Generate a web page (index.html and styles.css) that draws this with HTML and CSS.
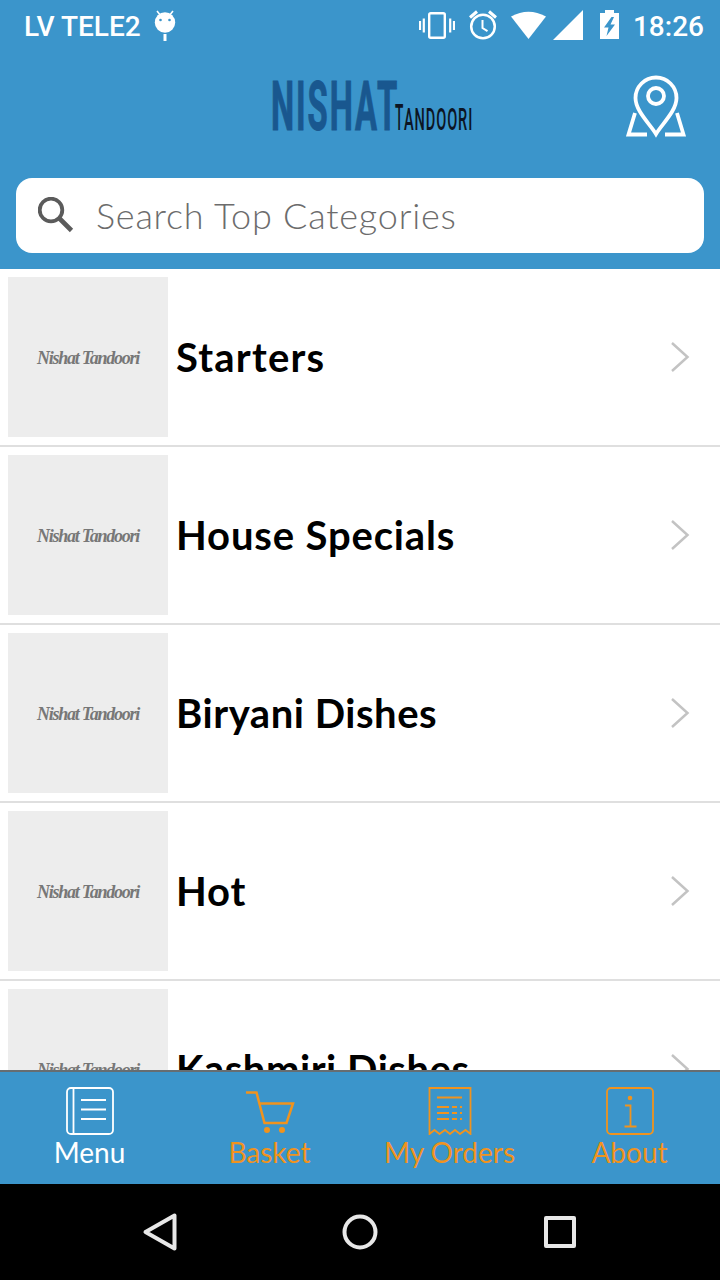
FILE: index.html
```html
<!DOCTYPE html>
<html lang="en">
<head>
    <meta charset="UTF-8">
    <meta name="viewport" content="width=device-width, initial-scale=1.0">
    <title>Nishat Tandoori</title>
    <link rel="stylesheet" href="styles.css">
</head>
<body>
    <header class="header">
        <div class="status-bar">
            <span class="carrier">LV TELE2</span>
            <svg class="droid" width="22" height="32" viewBox="0 0 22 32">
                <path d="M3 1l4 5M19 1l-4 5" stroke="#fff" stroke-width="1.6"/>
                <circle cx="11" cy="12.500" r="10.200" fill="#fff"/>
                <circle cx="6.500" cy="10" r="1.300" fill="#3b95cb"/>
                <circle cx="15.500" cy="10" r="1.300" fill="#3b95cb"/>
                <path d="M11 24v7" stroke="#fff" stroke-width="3"/>
            </svg>
            <div class="status-icons">
                <svg width="36" height="32" viewBox="0 0 36 32">
                    <rect x="10.200" y="3.200" width="15.600" height="24.600" rx="1.500" fill="none" stroke="#fff" stroke-width="2.400"/>
                    <path d="M1 11v9M4.800 8.500v14M31.200 8.500v14M35 11v9" stroke="#fff" stroke-width="2.200"/>
                </svg>
                <svg class="alarm" width="28" height="32" viewBox="0 0 28 32">
                    <circle cx="14" cy="16.500" r="11.800" fill="none" stroke="#fff" stroke-width="2.500"/>
                    <path d="M1 7.500l7-6M27 7.500l-7-6" stroke="#fff" stroke-width="3"/>
                    <path d="M13.500 10v8l5 3.200" fill="none" stroke="#fff" stroke-width="2"/>
                </svg>
                <svg class="wifi" width="35" height="32" viewBox="0 0 35 32">
                    <path d="M0 6.500Q17.500-3 35 6.500L17.500 29z" fill="#fff"/>
                </svg>
                <svg class="signal" width="30" height="32" viewBox="0 0 30 32">
                    <path d="M30 0v30H0z" fill="#fff"/>
                </svg>
                <svg class="battery" width="19" height="32" viewBox="0 0 19 32">
                    <path d="M0 3h5V0h9v3h5v26H0z" fill="#fff"/>
                    <path d="M11.500 7L4 17.500h4.500l-2 8.500L15 14.500h-4.500L14 7z" fill="#3b95cb"/>
                </svg>
            </div>
            <span class="clock">18:26</span>
        </div>

        <div class="brand-bar">
            <svg class="logo" width="212" height="80" viewBox="0 -8 212 80">
                <text class="logo-main" transform="translate(0 55) scale(.482 1)">NISHAT</text>
                <text class="logo-cap" transform="translate(124 55) scale(.38 1)">T</text>
                <text class="logo-sub" transform="translate(133 55) scale(.455 1)">ANDOORI</text>
            </svg>
            <svg class="pin" width="62" height="64" viewBox="0 0 62 64">
                <g fill="none" stroke="#fff" stroke-width="3.800">
                    <path d="M31 59C25 49 10.500 36 10.500 23a20.500 20.500 0 0 1 41 0C51.500 36 37 49 31 59z"/>
                    <circle cx="31" cy="21" r="8"/>
                    <path d="M10 38L3.500 59.500h18.500M52 38l6.500 21.500H40"/>
                </g>
            </svg>
        </div>

        <div class="search">
            <svg class="magnifier" width="36" height="36" viewBox="0 0 36 36">
                <circle cx="13" cy="13" r="11.300" fill="none" stroke="#5b5b5b" stroke-width="3.800"/>
                <path d="M21.500 21.500l12 12" stroke="#5b5b5b" stroke-width="4.600"/>
            </svg>
            <span class="placeholder">Search Top Categories</span>
        </div>
    </header>

    <main class="categories">
        <div class="category">
            <div class="thumb"><span>Nishat Tandoori</span></div>
            <span class="name wide">Starters</span>
            <svg class="chevron" width="20" height="32" viewBox="0 0 20 32"><path d="M2 2l15.500 14L2 30"/></svg>
        </div>
        <div class="category">
            <div class="thumb"><span>Nishat Tandoori</span></div>
            <span class="name medium">House Specials</span>
            <svg class="chevron" width="20" height="32" viewBox="0 0 20 32"><path d="M2 2l15.500 14L2 30"/></svg>
        </div>
        <div class="category">
            <div class="thumb"><span>Nishat Tandoori</span></div>
            <span class="name">Biryani Dishes</span>
            <svg class="chevron" width="20" height="32" viewBox="0 0 20 32"><path d="M2 2l15.500 14L2 30"/></svg>
        </div>
        <div class="category">
            <div class="thumb"><span>Nishat Tandoori</span></div>
            <span class="name medium">Hot</span>
            <svg class="chevron" width="20" height="32" viewBox="0 0 20 32"><path d="M2 2l15.500 14L2 30"/></svg>
        </div>
        <div class="category">
            <div class="thumb"><span>Nishat Tandoori</span></div>
            <span class="name">Kashmiri Dishes</span>
            <svg class="chevron" width="20" height="32" viewBox="0 0 20 32"><path d="M2 2l15.500 14L2 30"/></svg>
        </div>
    </main>

    <nav class="tabs">
        <div class="tab active">
            <svg width="48" height="48" viewBox="0 0 48 48">
                <rect x="1" y="1" width="46" height="46" rx="4"/>
                <path d="M7.500 1v46M15 13h25M15 22.500h25M15 32h25"/>
            </svg>
            <span>Menu</span>
        </div>
        <div class="tab">
            <svg width="50" height="48" viewBox="0 0 50 48">
                <path class="basket" d="M1 5.500h10.500l8 30.500h22l6.500-19.500H14.500"/>
                <circle class="dot" cx="22" cy="43" r="3"/>
                <circle class="dot" cx="37" cy="43" r="3"/>
            </svg>
            <span>Basket</span>
        </div>
        <div class="tab">
            <svg width="44" height="48" viewBox="0 0 44 48">
                <path d="M1.500 1h41v46l-5-4-5.500 4-5-4-5 4-5-4-5.500 4-5-4-5 4z"/>
                <path d="M9 10.500h25M9 20h12M24 20h5M32 20h2M9 26h12M24 26h5M32 26h2M9 32h12M24 32h5M32 32h2"/>
            </svg>
            <span>My Orders</span>
        </div>
        <div class="tab">
            <svg width="48" height="48" viewBox="0 0 48 48">
                <rect x="1" y="1" width="46" height="46" rx="4"/>
                <path d="M19 18.500h5.500V39M18.500 39.500h12"/>
                <circle class="dot" cx="24" cy="11" r="2.300"/>
            </svg>
            <span>About</span>
        </div>
    </nav>

    <footer class="nav-bar">
        <svg width="40" height="40" viewBox="0 0 40 40"><path d="M34.500 3.500v33L5.500 20z"/></svg>
        <svg width="40" height="40" viewBox="0 0 40 40"><circle cx="20" cy="20" r="15.500"/></svg>
        <svg width="40" height="40" viewBox="0 0 40 40"><rect x="6" y="6" width="28" height="28"/></svg>
    </footer>
</body>
</html>
```
FILE: styles.css
```css
* {
    box-sizing: border-box;
}

body {
    display: flex;
    flex-direction: column;
    width: 720px;
    height: 1280px;
    margin: 0;
    overflow: hidden;
    background-color: #fff;
    font-family: Lato, "Liberation Sans", sans-serif;
    white-space: nowrap;
}

svg {
    display: block;
    flex: none;
}

/* header */

.header {
    flex: none;
    height: 269px;
    background-color: #3b95cb;
}

.status-bar {
    display: flex;
    align-items: center;
    height: 50px;
    padding: 2px 16px 0 24px;
    color: #fff;
    font-family: Roboto, sans-serif;
    font-size: 28px;
    font-weight: 500;
}

.droid {
    margin-left: 13px;
}

.status-icons {
    display: flex;
    margin-left: auto;
}

.alarm {
    margin-left: 14px;
}

.wifi {
    margin-left: 14px;
}

.signal {
    margin-left: 7px;
}

.battery {
    margin-left: 17px;
}

.clock {
    margin-left: 14px;
}

.brand-bar {
    display: flex;
    align-items: flex-start;
    height: 128px;
    padding: 17px 33px 0 271px;
}

.logo text {
    font-family: Roboto, sans-serif;
    font-weight: 500;
}

.logo .logo-main {
    fill: #19578f;
    stroke: #19578f;
    stroke-width: 1px;
    font-size: 68px;
    font-weight: 700;
    letter-spacing: 4px;
}

.logo-sub,
.logo-cap {
    fill: #0c1524;
    font-size: 32px;
    letter-spacing: 2px;
}

.logo .logo-cap {
    font-size: 36px;
}

.pin {
    margin-top: 8px;
    margin-left: auto;
}

.search {
    display: flex;
    align-items: center;
    height: 75px;
    margin: 0 16px;
    padding: 0 22px 2px;
    border-radius: 16px;
    background-color: #fff;
}

.placeholder {
    margin-left: 22px;
    color: #6c6c6c;
    font-size: 36px;
    font-weight: 300;
    letter-spacing: 0.78px;
}

/* category list */

.categories {
    flex: 1;
    min-height: 0;
    overflow: hidden;
}

.category {
    display: flex;
    align-items: center;
    height: 178px;
    padding: 0 30px 0 8px;
    border-bottom: 2px solid #dfdfdf;
}

.thumb {
    display: flex;
    justify-content: center;
    align-items: center;
    width: 160px;
    height: 160px;
    padding-top: 2px;
    background-color: #ededed;
    color: #777;
    font-family: "Liberation Serif", serif;
    font-size: 18px;
    font-style: italic;
    font-weight: bold;
    letter-spacing: -1.25px;
}

.name {
    margin-left: 8px;
    color: #000;
    font-size: 40px;
    font-weight: 700;
    letter-spacing: 0.53px;
}

.medium {
    letter-spacing: 0.85px;
}

.wide {
    letter-spacing: 1.2px;
}

.chevron {
    margin-left: auto;
    fill: none;
    stroke: #c3c3c3;
    stroke-width: 2.5px;
}

/* tabs */

.tabs {
    display: grid;
    grid-template-columns: repeat(4, 1fr);
    flex: none;
    height: 114px;
    border-top: 2px solid #666d72;
    background-color: #3b95cb;
}

.tab {
    display: flex;
    flex-direction: column;
    align-items: center;
    padding-top: 15px;
    color: #f0931e;
    font-size: 28px;
    line-height: 34px;
}

.tab span {
    margin-right: 1px;
}

.tab svg {
    fill: none;
    stroke: currentColor;
    stroke-width: 1.8px;
}

.tab .basket {
    stroke-width: 2.5px;
}

.tab .dot {
    fill: currentColor;
    stroke: none;
}

.active {
    color: #fff;
}

/* system buttons */

.nav-bar {
    display: flex;
    justify-content: center;
    align-items: center;
    gap: 160px;
    flex: none;
    height: 96px;
    background-color: #000;
}

.nav-bar svg {
    fill: none;
    stroke: #e8e8e8;
    stroke-width: 4px;
    stroke-linejoin: round;
}
```
